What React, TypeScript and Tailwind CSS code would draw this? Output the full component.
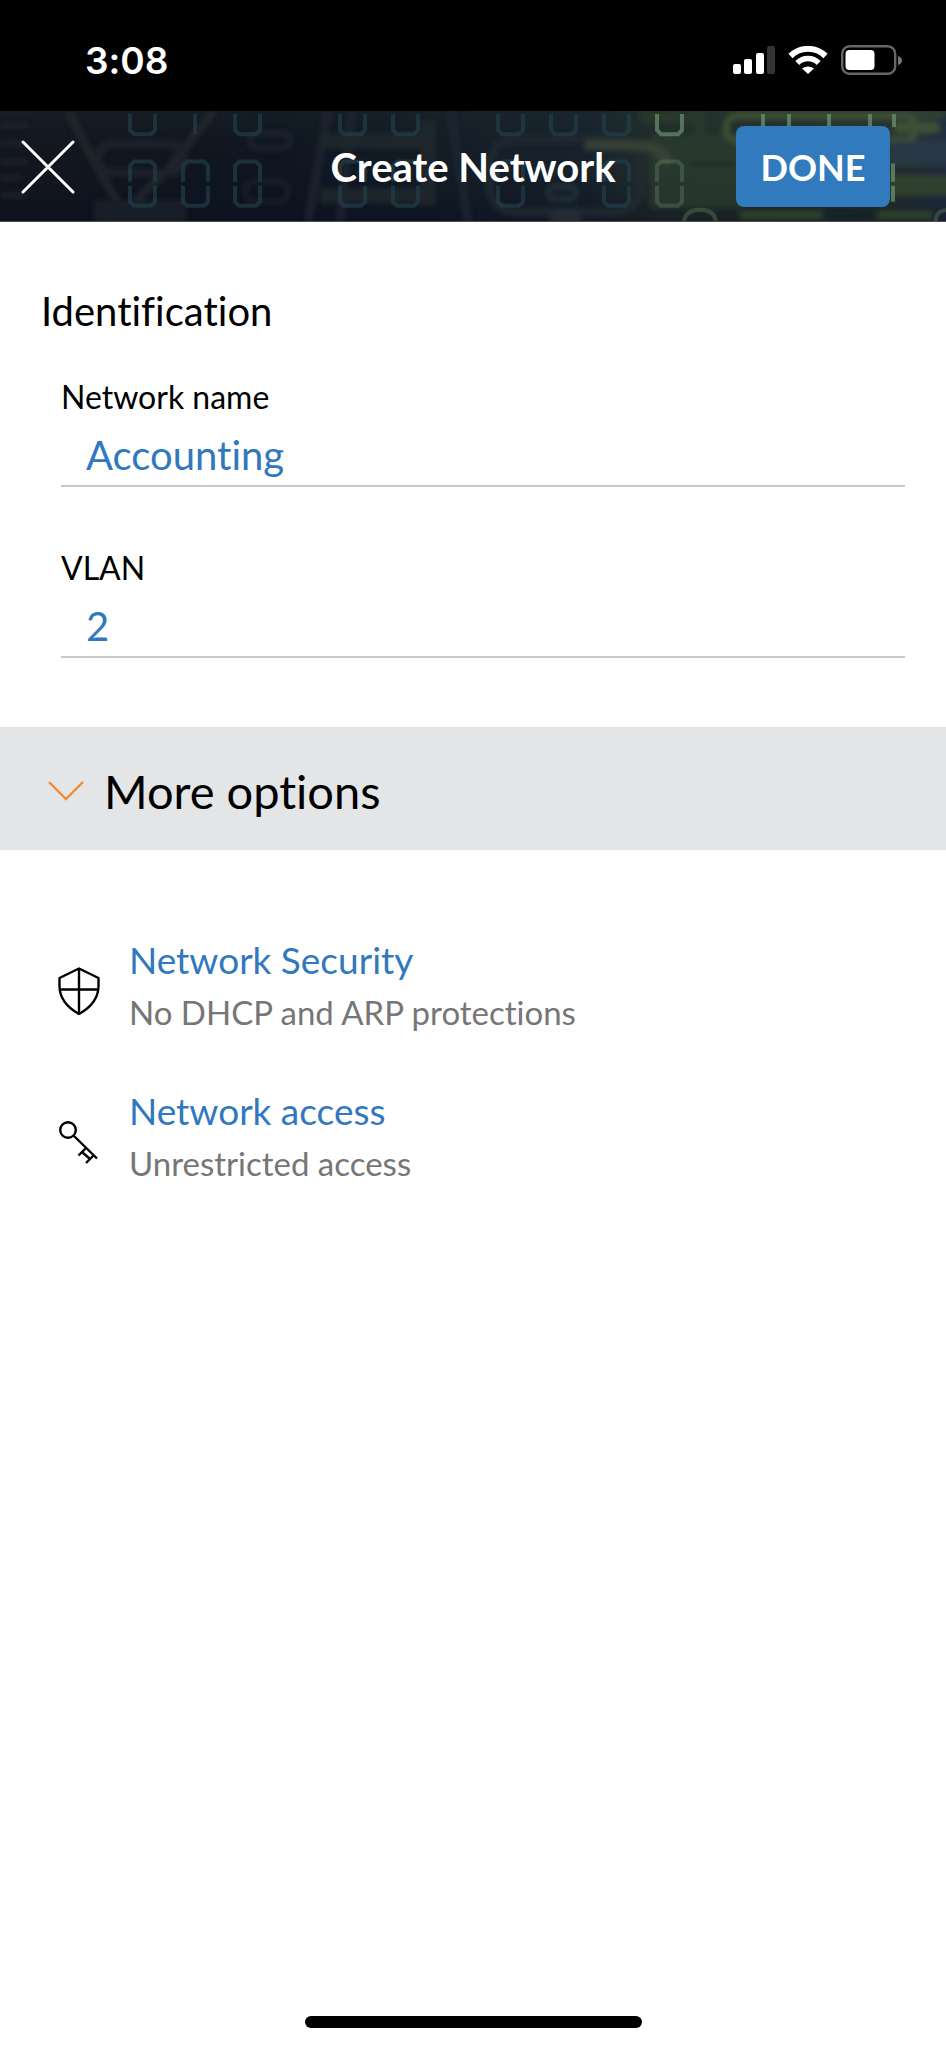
import { useState } from 'react';

// x positions of the faint display digits in the header artwork
const topDigits = [129, 234, 339, 392, 497, 550, 603];
const bottomDigits = [129, 182, 234, 339, 392, 497, 603];
const topStrokes = [761, 787, 827, 868, 892];

function HeaderArtwork() {
  return (
    <svg
      className="absolute inset-0 h-full w-full"
      viewBox="0 0 946 110"
      preserveAspectRatio="none"
      fill="none"
      aria-hidden="true"
    >
      <defs>
        <linearGradient id="base" x1="0" x2="1" y1="0" y2="0">
          <stop offset="0" stopColor="#13161d" />
          <stop offset="0.3" stopColor="#0f1620" />
          <stop offset="0.62" stopColor="#18242c" />
          <stop offset="0.7" stopColor="#26332c" />
          <stop offset="0.93" stopColor="#2d3c2b" />
          <stop offset="1" stopColor="#27334a" />
        </linearGradient>
        <linearGradient id="shade" x1="0" x2="0" y1="0" y2="1">
          <stop offset="0" stopColor="#1d2a30" stopOpacity="0.35" />
          <stop offset="0.5" stopColor="#0e1424" stopOpacity="0.1" />
          <stop offset="1" stopColor="#0a0e1f" stopOpacity="0.55" />
        </linearGradient>
        <filter id="soft" x="-10%" y="-50%" width="120%" height="200%">
          <feGaussianBlur stdDeviation="2.500" />
        </filter>
        <filter id="glow" x="-10%" y="-50%" width="120%" height="200%">
          <feGaussianBlur stdDeviation="0.700" />
        </filter>
      </defs>
      <rect width="946" height="110" fill="url(#base)" />
      <rect width="946" height="110" fill="url(#shade)" />

      <g filter="url(#soft)" opacity="0.75">
        <path d="M0 14H28M0 32H24M0 50H28M0 66H22M0 84H26" stroke="#23262d" strokeWidth="5" />
        <path d="M68 0L98 58L124 100L168 58L214 0" stroke="#25292f" strokeWidth="8" />
        <rect x="98" y="33" width="86" height="28" rx="14" stroke="#22262d" strokeWidth="8" />
        <rect x="94" y="88" width="92" height="30" fill="#1f2229" />
        <rect x="250" y="22" width="40" height="15" rx="8" stroke="#232830" strokeWidth="5" />
        <rect x="246" y="70" width="42" height="20" rx="9" stroke="#1c222a" strokeWidth="5" />
        <path d="M328 0L308 110M352 0L340 110M450 0L468 110" stroke="#242830" strokeWidth="8" />
        <path d="M320 30H428M320 84H428M428 10V94" stroke="#232a2f" strokeWidth="15" />
        <rect x="490" y="28" width="150" height="72" rx="24" stroke="#202b31" strokeWidth="9" />
        <rect x="548" y="75" width="28" height="12" rx="6" stroke="#2b383c" strokeWidth="5" />
        <rect x="550" y="98" width="32" height="14" rx="6" fill="#29333a" />
        <path d="M640 6H700V48H740" stroke="#2c3a2b" strokeWidth="12" />
        <rect x="650" y="24" width="92" height="72" fill="#2b3b2d" />
        <path d="M585 34H640Q664 36 668 54" stroke="#3f4a39" strokeWidth="10" />
        <path d="M738 4H946" stroke="#34472f" strokeWidth="8" />
        <rect x="726" y="5" width="190" height="24" rx="11" stroke="#465838" strokeWidth="7" />
        <rect x="894" y="11" width="46" height="11" rx="5" fill="#465c35" />
        <rect x="890" y="30" width="70" height="22" fill="#2c3a4b" />
        <path d="M890 59H946" stroke="#151f2b" strokeWidth="4" />
        <rect x="890" y="64" width="70" height="20" fill="#354729" />
        <path d="M690 52H736" stroke="#1c2929" strokeWidth="4" />
        <rect x="824" y="97" width="50" height="14" fill="#18242a" />
        <path d="M740 103H822M878 103H932" stroke="#34482f" strokeWidth="9" />
      </g>
      <path
        d="M684 112Q684 98 700 98Q716 98 716 112M946 98Q934 100 936 112"
        stroke="#4c6146"
        strokeWidth="4"
        opacity="0.6"
        filter="url(#glow)"
      />

      <g stroke="#24404c" strokeWidth="4" opacity="0.65" filter="url(#glow)">
        {topDigits.map((x) => (
          <path key={x} d={`M${x + 1} 3V19L${x + 5} 23H${x + 22}L${x + 26} 19V3`} />
        ))}
        <path d="M195 3V23" />
        {bottomDigits.map((x) => (
          <g key={x}>
            <path d={`M${x + 1} 70V54L${x + 5} 50H${x + 22}L${x + 26} 54V70`} />
            <path d={`M${x + 1} 74V90L${x + 5} 94H${x + 22}L${x + 26} 90V74`} />
          </g>
        ))}
      </g>
      <g stroke="#66896a" strokeWidth="4" filter="url(#glow)">
        <path d="M657 3V19L661 23H678L682 19V3" opacity="0.75" />
        <path
          d="M657 70V54L661 50H678L682 54V70M657 74V90L661 94H678L682 90V74"
          opacity="0.35"
        />
        {topStrokes.map((x) => (
          <path key={x} d={`M${x + 2} 3V16`} opacity="0.8" />
        ))}
        <path d="M893 52V70M893 74V90" opacity="0.8" />
      </g>
      <path d="M0 110H946" stroke="#4b4d50" strokeWidth="2" />
    </svg>
  );
}

function StatusBar() {
  return (
    <div className="flex h-[111px] shrink-0 items-center justify-between bg-black pr-11 pl-[85px] text-white">
      <span className="mt-[10px] font-[Inter] text-[37px] leading-[44px] font-semibold">3:08</span>
      <div className="mt-2 flex items-center gap-[13px]">
        <svg className="h-7 w-[42px]" viewBox="0 0 42 28" fill="#fff" aria-hidden="true">
          <rect y="18" width="8" height="10" rx="2" />
          <rect x="11" y="13" width="8" height="15" rx="2" />
          <rect x="23" y="7" width="8" height="21" rx="2" />
          <rect x="34" width="8" height="28" rx="2" fill="#333" />
        </svg>
        <svg className="h-7 w-10" viewBox="0 0 40 28" fill="none" aria-hidden="true">
          <path d="M2.500 10A25 25 0 0 1 37.500 10" stroke="#fff" strokeWidth="6" />
          <path d="M9.300 17A15 15 0 0 1 30.700 17" stroke="#fff" strokeWidth="5.500" />
          <path d="M20 28L14 22.500Q20 18.500 26 22.500Z" fill="#fff" />
        </svg>
        <svg className="h-[30px] w-[61px]" viewBox="0 0 61 30" fill="none" aria-hidden="true">
          <rect x="1.200" y="1.200" width="53" height="27.600" rx="7.500" stroke="#666" strokeWidth="2.400" />
          <rect x="4.500" y="5" width="29" height="20" rx="4" fill="#fff" />
          <path d="M57 11Q61 12.500 61 15.500T57 20Z" fill="#777" />
        </svg>
      </div>
    </div>
  );
}

function ShieldIcon() {
  return (
    <svg
      className="h-12 w-[42px]"
      viewBox="0 0 42 48"
      fill="none"
      stroke="#000"
      strokeWidth="2.400"
      strokeLinejoin="round"
      aria-hidden="true"
    >
      <path d="M21 1.500L40.500 11V19C40.500 31 33.500 40 21 47C8.500 40 1.500 31 1.500 19V11Z" />
      <path d="M21 1.500V47M1.500 22.500H40.500" />
    </svg>
  );
}

function KeyIcon() {
  return (
    <svg
      className="h-12 w-[42px]"
      viewBox="0 0 42 48"
      fill="none"
      stroke="#000"
      strokeWidth="2.400"
      aria-hidden="true"
    >
      <circle cx="10" cy="12" r="7.800" />
      <path d="M15.500 17.500L39 40.500M28 30L20.500 37.500M36 37L28 45M24 34L32 41" />
    </svg>
  );
}

type FieldProps = {
  id: string;
  label: string;
  value: string;
  onChange: (value: string) => void;
};

function Field({ id, label, value, onChange }: FieldProps) {
  return (
    <div className="flex flex-col">
      <label htmlFor={id} className="text-[32px] leading-10">
        {label}
      </label>
      <input
        id={id}
        value={value}
        onChange={(e) => onChange(e.target.value)}
        className="h-[70px] w-full border-b-2 border-[#c8c8c8] bg-transparent px-[25px] pt-[7px] text-[40px] text-[#3178be] outline-none"
      />
    </div>
  );
}

const options = [
  { title: 'Network Security', detail: 'No DHCP and ARP protections', icon: ShieldIcon },
  { title: 'Network access', detail: 'Unrestricted access', icon: KeyIcon },
];

export default function App() {
  const [name, setName] = useState('Accounting');
  const [vlan, setVlan] = useState('2');
  const [open, setOpen] = useState(true);

  return (
    <div className="flex min-h-screen flex-col bg-white font-[Lato,sans-serif] text-black [font-variant-ligatures:none]">
      <StatusBar />

      <header className="relative h-[111px] shrink-0 overflow-hidden">
        <HeaderArtwork />
        <div className="relative grid h-full grid-cols-[1fr_auto_1fr] items-center text-white">
          <button aria-label="Close" className="ml-[21px] justify-self-start">
            <svg
              className="size-[54px]"
              viewBox="0 0 54 54"
              stroke="#fff"
              strokeWidth="3"
              strokeLinecap="round"
              aria-hidden="true"
            >
              <path d="M2 2L52 52M52 2L2 52" />
            </svg>
          </button>
          <h1 className="text-[40px] leading-[48px] font-bold">Create Network</h1>
          <button className="mr-14 h-[81px] w-[154px] justify-self-end rounded-lg bg-[#307abd] text-[36px] font-bold">
            DONE
          </button>
        </div>
      </header>

      <main>
        <form className="px-[41px] pt-[65px] pb-[69px]" onSubmit={(e) => e.preventDefault()}>
          <h2 className="text-[40px] leading-[48px]">Identification</h2>
          <div className="mt-[42px] flex flex-col gap-[61px] pl-5">
            <Field id="network-name" label="Network name" value={name} onChange={setName} />
            <Field id="vlan" label="VLAN" value={vlan} onChange={setVlan} />
          </div>
        </form>

        <button
          aria-expanded={open}
          onClick={() => setOpen(!open)}
          className="flex h-[123px] w-full items-center gap-5 bg-[#e4e5e7] pt-1 pl-12 text-left"
        >
          <svg className="h-5 w-9" viewBox="0 0 36 20" fill="none" stroke="#f08c35" strokeWidth="2.400" aria-hidden="true">
            <path d="M1 1L18 18L35 1" />
          </svg>
          <span className="text-[47px] leading-[56px]">More options</span>
        </button>

        {open && (
          <ul className="flex flex-col gap-[55px] px-[58px] pt-[86px]">
            {options.map(({ title, detail, icon: Icon }) => (
              <li key={title} className="flex gap-[29px]">
                <div className="shrink-0 pt-[31px]">
                  <Icon />
                </div>
                <div className="flex flex-col items-start gap-2">
                  <a href="#" className="text-[37px] leading-[48px] text-[#3178be]">
                    {title}
                  </a>
                  <p className="text-[33px] leading-10 text-[#767676]">{detail}</p>
                </div>
              </li>
            ))}
          </ul>
        )}
      </main>

      <div className="mx-auto mt-auto mb-5 h-3 w-[337px] rounded-full bg-black" />
    </div>
  );
}
